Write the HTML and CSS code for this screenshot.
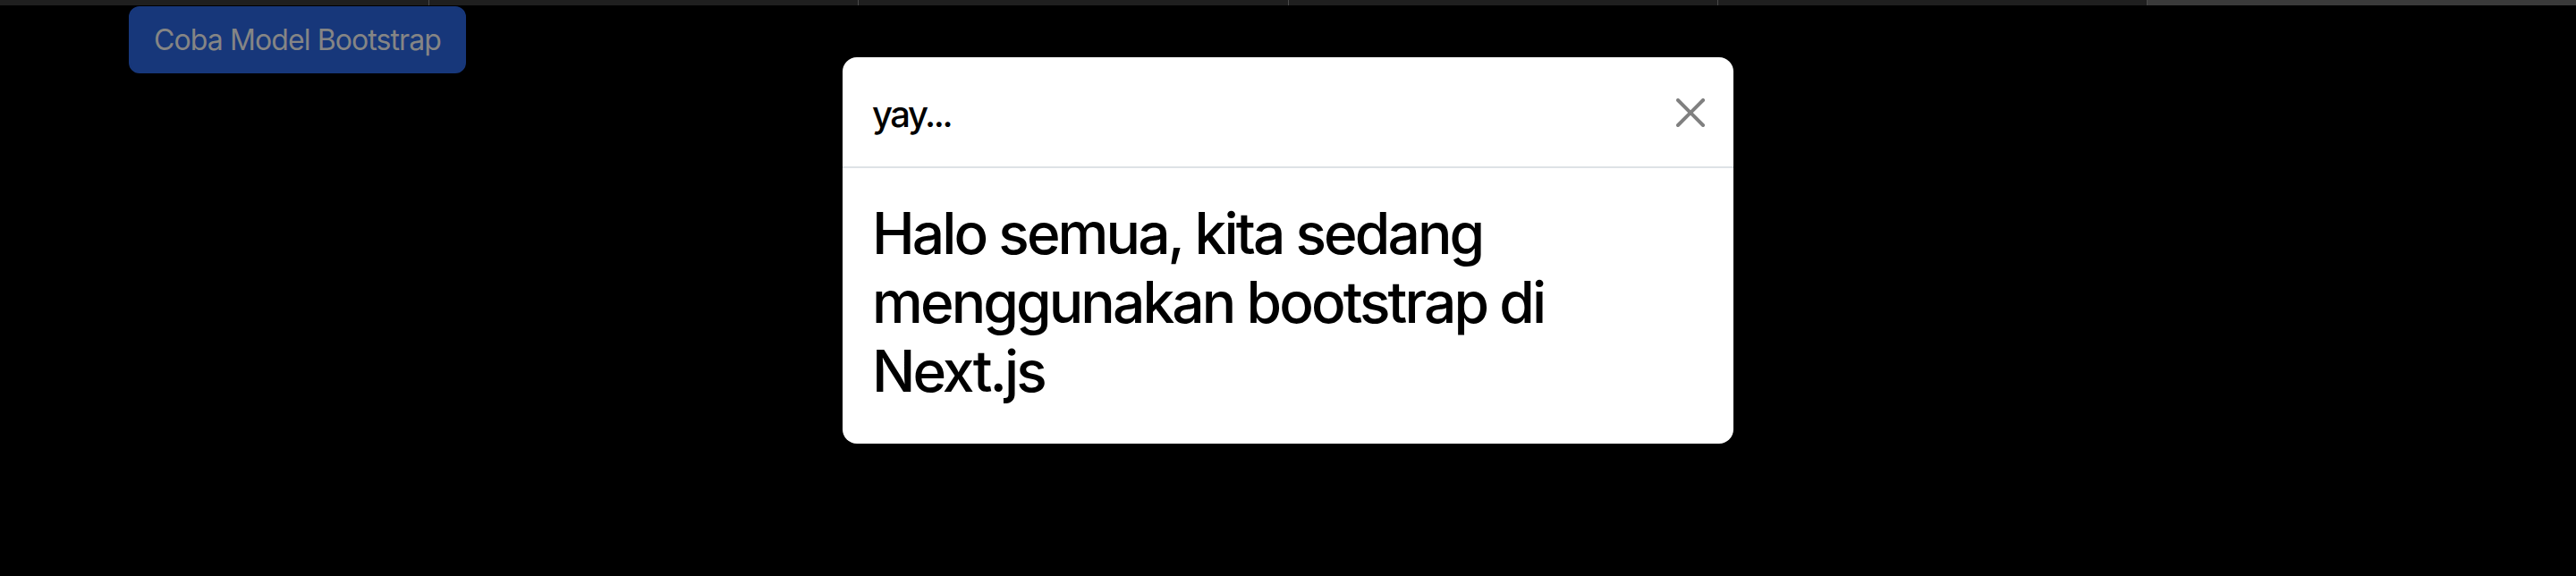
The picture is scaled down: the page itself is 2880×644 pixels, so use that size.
FILE: index.html
```html
<!DOCTYPE html>
<html lang="id">
<head>
<meta charset="utf-8">
<title>Coba Model Bootstrap</title>
<link rel="stylesheet" href="styles.css">
</head>
<body>
<div class="tabbar">
  <div class="tab"></div>
  <div class="tab"></div>
  <div class="tab"></div>
  <div class="tab"></div>
  <div class="tab"></div>
  <div class="tab active"></div>
</div>
<main class="page">
  <button class="btn-primary" type="button">Coba Model Bootstrap</button>
</main>
<div class="modal">
  <div class="modal-content">
    <div class="modal-header">
      <h1 class="modal-title">yay...</h1>
      <button class="btn-close" type="button" aria-label="Close">
        <svg viewBox="0 0 16 16" width="32" height="32"><path fill="#808080" d="M.293.293a1 1 0 0 1 1.414 0L8 6.586 14.293.293a1 1 0 1 1 1.414 1.414L9.414 8l6.293 6.293a1 1 0 0 1-1.414 1.414L8 9.414l-6.293 6.293a1 1 0 0 1-1.414-1.414L6.586 8 .293 1.707a1 1 0 0 1 0-1.414z"/></svg>
      </button>
    </div>
    <div class="modal-body">
      <h2 class="modal-text">Halo semua, kita sedang menggunakan bootstrap di Next.js</h2>
    </div>
  </div>
</div>
</body>
</html>
```

FILE: styles.css
```css
html, body {
  margin: 0;
  padding: 0;
  background: #000;
}
body {
  font-family: Inter, "Noto Sans", "Liberation Sans", sans-serif;
  height: 644px;
  overflow: hidden;
}
.tabbar {
  display: flex;
  height: 6px;
  background: #1f1f1f;
}
.tab {
  flex: 1;
  background: #1f1f1f;
  border-left: 1px solid #4a4a4a;
}
.tab:first-child {
  border-left: none;
}
.tab.active {
  background: #3a3a3a;
}
.page {
  padding: 1px 0 0 144px;
}
.btn-primary {
  display: block;
  box-sizing: border-box;
  width: 377px;
  height: 75px;
  padding: 0;
  border: 2px solid #17377a;
  border-radius: 12px;
  background: #17377a;
  color: #858585;
  font-family: inherit;
  font-size: 32px;
  font-weight: 400;
  line-height: 48px;
  letter-spacing: -0.9px;
  white-space: nowrap;
  text-align: center;
}
.modal {
  position: fixed;
  inset: 0;
  display: flex;
  justify-content: center;
  align-items: flex-start;
  padding-top: 64px;
}
.modal-content {
  width: 996px;
  background: #fff;
  border-radius: 16px;
  color: #000;
}
.modal-header {
  display: flex;
  align-items: center;
  justify-content: space-between;
  height: 124px;
  box-sizing: border-box;
  padding: 35px 32px 29px 33px;
  border-bottom: 2px solid #dee2e6;
}
.modal-title {
  margin: 0;
  font-size: 40px;
  font-weight: 500;
  line-height: 60px;
  letter-spacing: -2.4px;
}
.btn-close {
  display: flex;
  padding: 0;
  margin: -4px 0 0 0;
  border: 0;
  background: transparent;
  width: 32px;
  height: 32px;
}
.modal-body {
  padding: 34px 32px 0 33px;
  height: 308px;
  box-sizing: border-box;
}
.modal-text {
  margin: 0;
  width: 880px;
  font-size: 64px;
  font-weight: 500;
  line-height: 77px;
  letter-spacing: -2.9px;
}
```
